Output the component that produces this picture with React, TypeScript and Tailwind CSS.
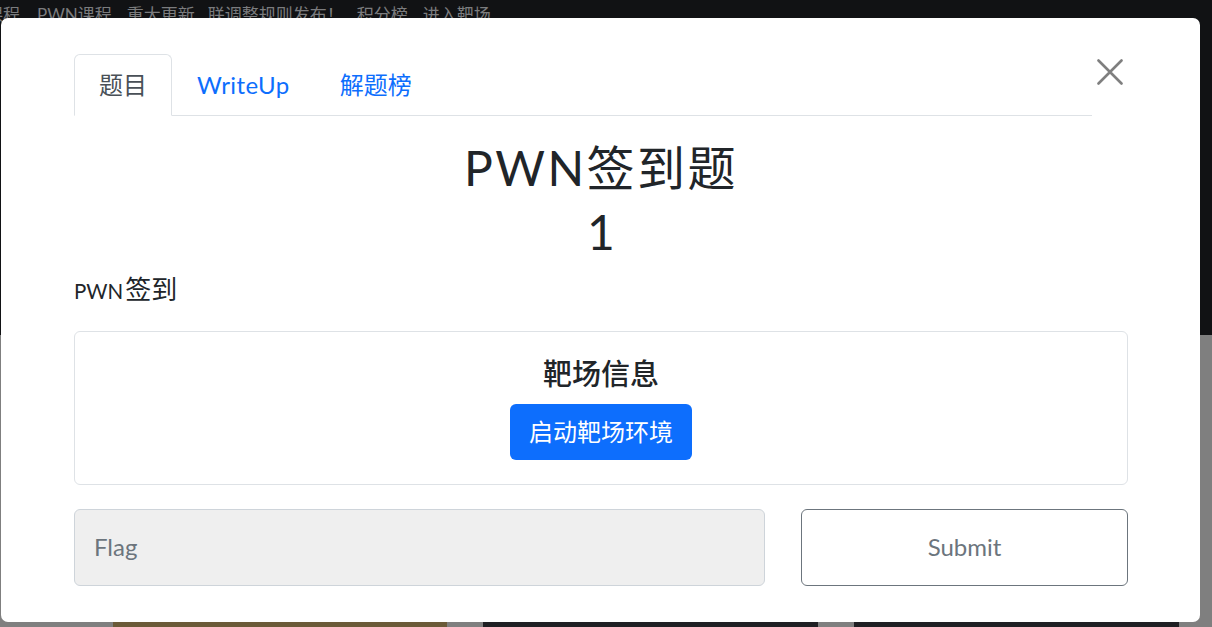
import React from "react";

const FONT = { fontFamily: 'Lato, "Noto Sans CJK SC", "Noto Sans", sans-serif' };

export default function App() {
  return (
    <div className="relative h-[627px] w-[1212px] overflow-hidden bg-[#7f7f7f]" style={FONT}>
      {/* page behind backdrop */}
      <div className="h-[335px] bg-[#111214]">
        <div className="flex h-[30px] items-center whitespace-nowrap text-[17px] leading-[30px] text-[#7b7c7e]">
          <span className="ml-[-14px]">课程</span>
          <span className="ml-[17px]">PWN课程</span>
          <span className="ml-[15px]">重大更新</span>
          <span className="ml-[13px]">联调整规则发布！</span>
          <span className="ml-[13px]">积分榜</span>
          <span className="ml-[15px]">进入靶场</span>
        </div>
      </div>
      <div className="flex gap-[36px] pl-[113px] pt-[265px]">
        <div className="h-[40px] w-[334px] bg-[#6b5a38]" />
        <div className="h-[40px] w-[335px] bg-[#1f1f23]" />
        <div className="h-[40px] w-[325px] bg-[#1f1f23]" />
      </div>

      {/* modal */}
      <div className="absolute left-[1px] top-[18px] w-[1199px] rounded-[7px] bg-white pb-[36px] pl-[73px] pr-[72px] pt-[36px] text-[#212529]">
        <div className="flex items-start">
          <div className="flex flex-1 border-b border-[#dee2e6]">
            <div className="-mb-px flex h-[62px] items-center rounded-t-[6px] border border-[#dee2e6] border-b-white bg-white px-6 text-[24px] text-[#495057]">
              题目
            </div>
            <div className="flex h-[61px] items-center border border-transparent px-6 text-[24px] tracking-[0.4px] text-[#0d6efd]">
              WriteUp
            </div>
            <div className="flex h-[61px] items-center border border-transparent px-6 text-[24px] text-[#0d6efd]">
              解题榜
            </div>
          </div>
          <button className="flex h-[36px] w-[36px] items-center justify-center">
            <svg width="26" height="26" viewBox="0 0 26 26">
              <path d="M1.5 1.5 L24.5 24.5 M24.5 1.5 L1.5 24.5" stroke="#7f7f7f" strokeWidth="2.6" strokeLinecap="round" />
            </svg>
          </button>
        </div>

        <div className="mt-[23px] text-center text-[48px] leading-[1.2] tracking-[2.5px]">PWN签到题</div>
        <div className="mt-[6px] text-center text-[48px] leading-[1.2]">1</div>
        <div className="mt-[15px] flex h-[29px] items-baseline">
          <span className="text-[20.5px] leading-[29px]">PWN</span>
          <span className="ml-[2px] text-[26px] leading-[29px]">签到</span>
        </div>

        <div className="mt-[27px] flex flex-col items-center rounded-[6px] border border-[#dee2e6] pb-[24px] pt-[25px]">
          <div className="text-[29px] font-medium leading-[1.2]">靶场信息</div>
          <button className="mt-[12px] flex h-[56px] items-center rounded-[6px] bg-[#0d6efd] px-[19px] text-[24px] text-white">
            启动靶场环境
          </button>
        </div>

        <div className="mt-[24px] flex gap-[36px]">
          <div className="flex h-[77px] flex-1 items-center rounded-[6px] border border-[#ced4da] bg-[#efefef] pl-[19px] text-[24px] text-[#6c757d]">
            Flag
          </div>
          <button className="flex h-[77px] w-[327px] items-center justify-center rounded-[6px] border border-[#6c757d] bg-white text-[24px] text-[#6c757d]">
            Submit
          </button>
        </div>
      </div>
    </div>
  );
}
